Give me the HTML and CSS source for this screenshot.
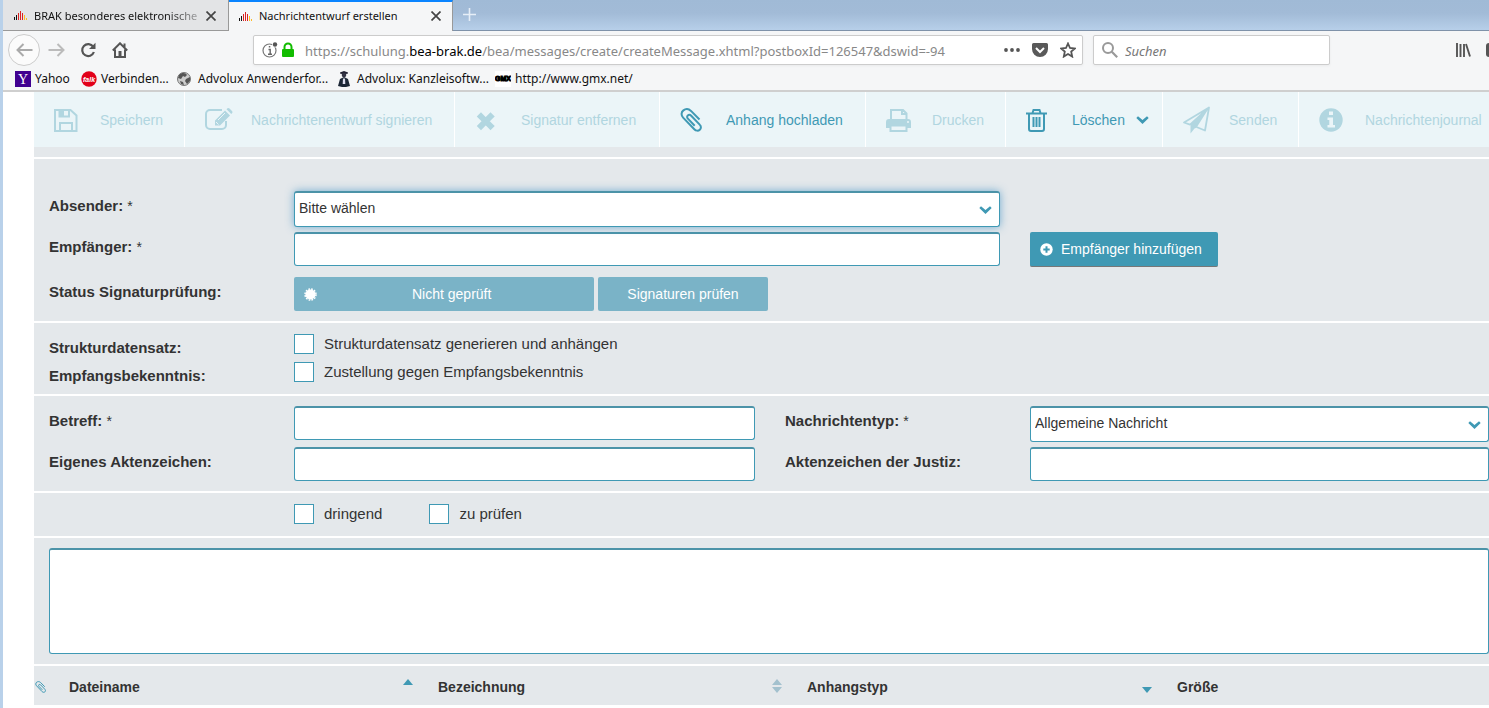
FILE: index.html
```html
<!DOCTYPE html>
<html lang="de">
<head>
<meta charset="utf-8">
<meta name="viewport" content="width=device-width, initial-scale=1">
<title>Nachrichtentwurf erstellen</title>
<link rel="stylesheet" href="styles.css">
</head>
<body>
<svg class="sprite" aria-hidden="true">
  <symbol id="favicon" viewBox="0 0 13 9"><path d="M0 6h1v3H0zM2 4h1v5H2z" fill="#111"/><path d="M4 2h1v7H4zM6 0h1v9H6zM8 2h1v7H8z" fill="#d22"/><path d="M10 4h1v5h-1zM12 7h1v2h-1z" fill="#fb2"/></symbol>
  <symbol id="cross" viewBox="0 0 10 10"><path d="M.5.5l9 9M9.500.5l-9 9" stroke="currentColor" stroke-width="1.700" fill="none"/></symbol>
  <symbol id="chevron" viewBox="0 0 13 8"><path d="M.3 2 2 .2l4.500 3.700L11 .2 12.700 2 6.500 8z" fill="currentColor"/></symbol>
  <symbol id="clip" viewBox="0 0 22 24"><path d="M19.500 11.500 11 2.900C8.800.9 5.700.6 3.400 2.400s-2.500 5-.3 7.200l11.200 11.700c1.600 1.600 4 1.800 5.500.4s1.500-3.500-.1-5.100L11.200 7.700C10.200 6.700 8.700 6.600 7.800 7.400s-.9 2.200.1 3.200l6.800 7.100" fill="none" stroke="currentColor" stroke-width="2"/></symbol>
</svg>

<header class="browser">
  <div class="tabs" role="tablist">
    <button class="tab" role="tab" aria-selected="false"><svg class="favicon"><use href="#favicon"/></svg><span class="tab-title tab-title-fade">BRAK besonderes elektronische</span><svg class="tab-close"><use href="#cross"/></svg></button>
    <button class="tab tab-active" role="tab" aria-selected="true"><svg class="favicon"><use href="#favicon"/></svg><span class="tab-title">Nachrichtentwurf erstellen</span><svg class="tab-close"><use href="#cross"/></svg></button>
    <button class="new-tab" aria-label="Neuer Tab"><svg width="13" height="13" viewBox="0 0 13 13"><path d="M6.500 0v13M0 6.500h13" stroke="#e6eef7" stroke-width="1.600"/></svg></button>
  </div>
  <div class="navbar">
    <div class="nav-buttons">
      <button class="nav-button nav-back" aria-label="Zurück"><svg width="17" height="14" viewBox="0 0 17 14"><path d="M16.500 7H1.500M7.500 1l-6 6 6 6" fill="none" stroke="#aaa" stroke-width="2"/></svg></button>
      <button class="nav-button" aria-label="Vor"><svg width="17" height="14" viewBox="0 0 17 14"><path d="M.5 7h15M9.500 1l6 6-6 6" fill="none" stroke="#bbb" stroke-width="2"/></svg></button>
      <button class="nav-button" aria-label="Neu laden"><svg width="16" height="16" viewBox="0 0 16 16"><path d="M13.200 4.700A6 6 0 1 0 13.900 10" fill="none" stroke="#555" stroke-width="2.200"/><path d="M15.500.8V7H9z" fill="#555"/></svg></button>
      <button class="nav-button" aria-label="Startseite"><svg width="16" height="16" viewBox="0 0 16 16"><path d="M.8 8.500 8 1.300l7.200 7.200M3 7.500V15h10V7.500M12.500 1.500V5" fill="none" stroke="#555" stroke-width="2"/><path d="M6.500 9h3v6h-3z" fill="#555"/></svg></button>
    </div>
    <div class="urlbar">
      <svg class="identity" width="34" height="16" viewBox="0 0 34 16"><circle cx="7.500" cy="8.500" r="6.500" fill="none" stroke="#777" stroke-width="1.200"/><path d="M6.500 7.500h1.700v4.500M6 12.200h4M6.800 4.700h1.500" fill="none" stroke="#666" stroke-width="1.400"/><circle cx="13" cy="2.500" r="3" fill="#fff"/><circle cx="13" cy="2.500" r="2.200" fill="#555"/><rect x="20" y="7" width="12" height="8" rx="1" fill="#12bc00"/><path d="M22.500 8V5a3.500 3.500 0 0 1 7 0v3" fill="none" stroke="#12bc00" stroke-width="2"/></svg>
      <span class="url" role="textbox" contenteditable="true" spellcheck="false" aria-label="Adresse">https://schulung.<span class="url-domain">bea-brak.de</span>/bea/messages/create/createMessage.xhtml?postboxId=126547&amp;dswid=-94</span>
      <button class="url-action" aria-label="Seitenaktionen"><svg width="16" height="4" viewBox="0 0 16 4"><g fill="#555"><circle cx="2" cy="2" r="1.900"/><circle cx="8" cy="2" r="1.900"/><circle cx="14" cy="2" r="1.900"/></g></svg></button>
      <button class="url-action" aria-label="Pocket"><svg width="16" height="14" viewBox="0 0 16 14"><path d="M1.500 0h13A1.500 1.500 0 0 1 16 1.500V6A8 8 0 0 1 0 6V1.500A1.500 1.500 0 0 1 1.500 0z" fill="#595959"/><path d="m4 5 4 4 4-4" fill="none" stroke="#fff" stroke-width="2"/></svg></button>
      <button class="url-action" aria-label="Lesezeichen"><svg width="16" height="16" viewBox="0 0 16 16"><path d="m8 1.500 2 4.500 4.800.5-3.600 3.200 1 4.900L8 12.100l-4.200 2.500 1-4.900L1.200 6.500 6 6z" fill="none" stroke="#555" stroke-width="1.800"/></svg></button>
    </div>
    <label class="search"><svg width="16" height="16" viewBox="0 0 16 16"><circle cx="6" cy="6" r="5" fill="none" stroke="#999" stroke-width="2"/><path d="m9.800 9.800 5.400 5.400" stroke="#999" stroke-width="2.200"/></svg><input class="search-input" type="search" placeholder="Suchen" aria-label="Suchen"></label>
    <div class="nav-right">
      <button class="library" aria-label="Bibliothek"><svg width="15" height="14" viewBox="0 0 15 14"><path d="M1 0v14M4.500 1v13M8 1v13M10 1l4 12.500" fill="none" stroke="#555" stroke-width="1.900"/></svg></button>
      <button class="sidebar-toggle" aria-label="Seitenleiste"></button>
    </div>
  </div>
  <nav class="bookmarks" aria-label="Lesezeichen">
    <a class="bookmark bookmark-yahoo" href="#"><svg width="16" height="16" viewBox="0 0 16 16"><path d="M0 0h16v16H0z" fill="#400090"/><text class="yahoo-mark" x="8" y="13" text-anchor="middle">Y</text></svg>Yahoo</a>
    <a class="bookmark bookmark-falk" href="#"><svg width="16" height="16" viewBox="0 0 16 16"><circle cx="8" cy="8" r="7.700" fill="#e2001a"/><text class="falk-mark" x="8" y="11" text-anchor="middle">falk</text></svg>Verbinden...</a>
    <a class="bookmark bookmark-forum" href="#"><svg width="14" height="14" viewBox="0 0 14 14"><circle cx="7" cy="7" r="6.500" fill="#ccc" stroke="#777"/><path d="M2 3c3-3 7-2 8 0L8 5 6 4 4 7 1 6zm7 4 4-2v4l-3 3-2-3zM3 9l3 1 1 3-3-1z" fill="#555"/></svg>Advolux Anwenderfor...</a>
    <a class="bookmark bookmark-advolux" href="#"><svg width="12" height="16" viewBox="0 0 12 16"><path d="M2 1.500 6 0l4 1.500v1L6 3.500l-4-1z" fill="#223"/><circle cx="6" cy="4" r="2.300" fill="#334"/><path d="m0 15 2-7 4-2 4 2 2 7-4 1H4z" fill="#1b2635"/><path d="m5 7 1 1 1-1 .3 6H4.700z" fill="#dde"/></svg>Advolux: Kanzleisoftw...</a>
    <a class="bookmark bookmark-gmx" href="#"><svg width="16" height="16" viewBox="0 0 16 16"><path d="M0 0h16v16H0z" fill="#fff"/><text class="gmx-mark" x="8" y="10" text-anchor="middle">GMX</text></svg>http://www.gmx.net/</a>
  </nav>
</header>

<main class="page">
  <div class="toolbar" role="toolbar" aria-label="Nachricht">
    <button class="tool" disabled><svg class="tool-icon" viewBox="0 0 32 32"><path d="M5 6h15.500l6 5.500V27H5zM10 27v-8h12v8M9.500 6v6.500H19V6" fill="none" stroke="currentColor" stroke-width="2"/><path d="M9 5h5v8H9z" fill="currentColor"/></svg>Speichern</button>
    <button class="tool" disabled><svg class="tool-icon" viewBox="0 0 32 32"><path d="M21 6H9a4 4 0 0 0-4 4v11a4 4 0 0 0 4 4h12a4 4 0 0 0 4-4v-4" fill="none" stroke="currentColor" stroke-width="2"/><path d="M14 21.500v-5l10-10 5 5-10 10zM25.500 5.300l1-1q1-.7 2 .2l2.500 2.500q1 1 .2 2l-1 1z" fill="currentColor"/><path d="m17 16 7-7M15 18l2.500 2.500" stroke="#ebf5f8"/></svg>Nachrichtenentwurf signieren</button>
    <button class="tool" disabled><svg class="tool-icon" viewBox="0 0 32 32"><path d="m10 12.500 9.500 9.500m0-9.500-9.500 9.500" stroke="currentColor" stroke-width="6" stroke-linecap="square"/></svg>Signatur entfernen</button>
    <button class="tool"><svg class="tool-icon" viewBox="-4 -4 32 32"><use href="#clip" width="22" height="24"/></svg>Anhang hochladen</button>
    <button class="tool" disabled><svg class="tool-icon" viewBox="0 0 32 32"><path d="M9 16V6h12l3.500 3.500V16M20 6v4h4" fill="none" stroke="currentColor" stroke-width="2"/><path d="M7 15h19a3 3 0 0 1 3 3v6h-4v-3H8v3H4v-6a3 3 0 0 1 3-3z" fill="currentColor"/><path d="M8.500 21.500h16V27h-16z" fill="#ebf5f8" stroke="currentColor" stroke-width="2"/><circle cx="26" cy="18" r="1" fill="#ebf5f8"/></svg>Drucken</button>
    <button class="tool"><svg class="tool-icon" viewBox="0 0 32 32"><path d="M4 9.500h21M10.500 9l1-3h6l1 3M7 9v16q0 2 2 2h11q2 0 2-2V9M11.500 13v10M14.500 13v10M17.500 13v10" fill="none" stroke="currentColor" stroke-width="2"/></svg>Löschen<svg class="chevron tool-chevron"><use href="#chevron"/></svg></button>
    <button class="tool" disabled><svg class="tool-icon" viewBox="0 0 32 32"><path d="M30 3.500 5 18.500l6 2.200L30 3.500l-4 23-8.500-3.500" fill="none" stroke="currentColor" stroke-width="1.800" stroke-linejoin="round"/><path d="M30 4 11.500 20.500v9l4-5 2-.7z" fill="currentColor"/></svg>Senden</button>
    <button class="tool" disabled><svg class="tool-icon" viewBox="0 0 32 32"><circle cx="16" cy="16" r="11.700" fill="currentColor"/><path d="M14 7.500h4V11h-4zM12.500 13.500H18V21h2v2.500h-7.500V21h1.800v-5h-1.800z" fill="#ebf5f8"/></svg>Nachrichtenjournal</button>
  </div>
  <div class="strip"></div>

  <form>
    <section class="section section-address">
      <div class="row row-tall">
        <label class="label" for="absender">Absender: <span class="required">*</span></label>
        <div class="select-box field-wide"><select class="control select select-focus" id="absender"><option>Bitte wählen</option></select><svg class="chevron select-chevron"><use href="#chevron"/></svg></div>
      </div>
      <div class="row row-recipient">
        <label class="label" for="empfaenger">Empfänger: <span class="required">*</span></label>
        <input class="control field-wide" id="empfaenger" type="text">
        <button class="button button-primary" type="button"><svg width="13" height="13" viewBox="0 0 13 13"><circle cx="6.500" cy="6.500" r="6.200" fill="#fff"/><path d="M6.500 3.300v6.400M3.300 6.500h6.400" stroke="#3f99b4" stroke-width="2"/></svg>Empfänger hinzufügen</button>
      </div>
      <div class="row">
        <span class="label">Status Signaturprüfung:</span>
        <div class="status">
          <button class="button button-muted button-status" type="button"><svg class="status-icon" viewBox="0 0 13 13"><circle cx="6.500" cy="6.500" r="5" fill="#fff"/><circle cx="6.500" cy="6.500" r="5.500" fill="none" stroke="#fff" stroke-width="1.500" stroke-dasharray="1.700 1.180"/></svg>Nicht geprüft</button>
          <button class="button button-muted button-check" type="button">Signaturen prüfen</button>
        </div>
      </div>
    </section>

    <section class="section section-options">
      <div class="row"><span class="label label-option">Strukturdatensatz:</span><label class="option"><input class="check" type="checkbox">Strukturdatensatz generieren und anhängen</label></div>
      <div class="row"><span class="label label-option">Empfangsbekenntnis:</span><label class="option"><input class="check" type="checkbox">Zustellung gegen Empfangsbekenntnis</label></div>
    </section>

    <section class="section section-subject">
      <div class="row row-tall">
        <label class="label" for="betreff">Betreff: <span class="required">*</span></label>
        <input class="control" id="betreff" type="text">
        <label class="label label-second" for="typ">Nachrichtentyp: <span class="required">*</span></label>
        <div class="select-box"><select class="control select" id="typ"><option>Allgemeine Nachricht</option></select><svg class="chevron select-chevron"><use href="#chevron"/></svg></div>
      </div>
      <div class="row">
        <label class="label" for="eigenes">Eigenes Aktenzeichen:</label>
        <input class="control" id="eigenes" type="text">
        <label class="label label-second" for="justiz">Aktenzeichen der Justiz:</label>
        <input class="control" id="justiz" type="text">
      </div>
    </section>

    <section class="section section-flags">
      <label class="option"><input class="check" type="checkbox">dringend</label>
      <label class="option"><input class="check" type="checkbox">zu prüfen</label>
    </section>

    <section class="section section-message">
      <textarea class="control message" aria-label="Nachricht"></textarea>
    </section>
  </form>

  <table class="files">
    <colgroup><col class="col-icon"><col class="col-name"><col class="col-name"><col class="col-type"><col></colgroup>
    <thead><tr>
      <th class="cell-icon" scope="col" aria-label="Anhang"><svg class="mini-clip"><use href="#clip"/></svg></th>
      <th scope="col"><div class="head">Dateiname<svg class="sort" viewBox="0 0 10 14"><path d="m5 0 5 6H0z" fill="#3f99b4"/></svg></div></th>
      <th scope="col"><div class="head">Bezeichnung<svg class="sort" viewBox="0 0 10 14"><path d="m5 0 5 6H0zM5 14l5-6H0z" fill="#a3c1ce"/></svg></div></th>
      <th scope="col"><div class="head">Anhangstyp<svg class="sort" viewBox="0 0 10 14"><path d="m5 14 5-6H0z" fill="#3f99b4"/></svg></div></th>
      <th scope="col"><div class="head">Größe</div></th>
    </tr></thead>
  </table>
</main>
</body>
</html>
```
FILE: styles.css
```css
* { box-sizing: border-box; }
body {
  margin: 0;
  min-height: 100vh;
  overflow: hidden;
  background: #fff;
  border-left: 3px solid #b9d1ea;
  color: #333;
  font: 14px/20px "Liberation Sans", Arial, sans-serif;
}
button, input, select, textarea { font: inherit; color: inherit; margin: 0; }
button { border: 0; padding: 0; background: none; }
svg { flex: none; display: block; }
.sprite { position: absolute; width: 0; height: 0; }

/* Browser frame */
.browser {
  background: #f5f6f7;
  border-bottom: 2px solid #cfcfcf;
  color: #111;
  font: 12px/16px "Noto Sans", "Open Sans", sans-serif;
}
.tabs {
  display: flex;
  height: 31px;
  background: linear-gradient(#a0bad6 0, #a2bbd7 13px, #b7cfe9 30px);
  border-bottom: 1px solid #7f92a9;
}
.tab {
  display: flex;
  align-items: center;
  width: 226px;
  height: 31px;
  padding: 1px 12px 0 11px;
  background: #e3e4e6;
  border-right: 1px solid #999;
  border-bottom: 1px solid #999;
  font-size: 11px;
}
.tab-active {
  width: 224px;
  background: #f5f6f7;
  border-top: 2px solid #0a84ff;
  border-bottom: 0;
  padding: 0 11px 1px 10px;
}
.favicon { width: 13px; height: 9px; margin-right: 7px; }
.tab-title { flex: 1; min-width: 0; white-space: nowrap; text-align: left; }
.tab-title-fade { -webkit-mask-image: linear-gradient(90deg, #000 80%, #0004); mask-image: linear-gradient(90deg, #000 80%, #0004); }
.tab-close { width: 10px; height: 10px; margin-left: 7px; color: #444; }
.new-tab { padding: 0 10px 2px; }

.navbar {
  display: grid;
  grid-template-columns: 245px minmax(0, 830fr) minmax(0, 247fr) minmax(0, 159fr);
  align-items: center;
  height: 38px;
  padding-left: 5px;
}
.nav-buttons { display: flex; }
.nav-button { display: flex; align-items: center; justify-content: center; width: 32px; height: 32px; }
.nav-back { border: 1px solid #ccc; border-radius: 50%; background: #fbfbfb; }
.urlbar, .search {
  display: flex;
  align-items: center;
  height: 30px;
  background: #fff;
  border: 1px solid #ccc;
  border-radius: 2px;
  box-shadow: 0 1px 3px #0000000d;
}
.urlbar { padding: 0 6px 0 8px; gap: 12px; }
.identity { margin-right: -3px; }
.url { flex: 1; min-width: 0; padding-top: 2px; overflow: hidden; white-space: nowrap; color: #888; font-size: 13px; line-height: 20px; outline: 0; }
.url-domain { color: #000; }
.url-action { display: flex; }
.search { margin-left: 10px; padding: 0 8px; gap: 7px; }
.search-input { flex: 1; min-width: 0; padding: 2px 0 0; border: 0; outline: 0; background: none; font-size: 13px; }
.search-input::placeholder { color: #777; font-style: italic; opacity: 1; }
.nav-right { display: flex; justify-content: flex-end; gap: 15px; }
.sidebar-toggle { width: 3px; height: 14px; background: #555; border-radius: 3px 0 0 3px; }
.bookmarks { display: flex; align-items: center; height: 21px; padding: 0 12px 1px; }
.bookmark { display: flex; align-items: center; gap: 4px; color: #111; text-decoration: none; white-space: nowrap; }
.bookmark-yahoo { width: 66px; }
.bookmark-falk { width: 96px; }
.bookmark-forum { width: 161px; gap: 7px; }
.bookmark-advolux { width: 157px; gap: 7px; }
.yahoo-mark { font: 14px "Liberation Serif", serif; fill: #fff; }
.falk-mark { font: italic bold 7px "Liberation Sans", sans-serif; fill: #fff; }
.gmx-mark { font: bold 7px "Liberation Sans", sans-serif; fill: #000; stroke: #000; stroke-width: 1px; }

/* Message actions */
.page { padding-left: 31px; }
.toolbar {
  display: grid;
  grid-template-columns: 151px 270px 205px 206px 140px 157px 136px minmax(190px, 1fr);
  height: 55px;
  background: #ebf5f8;
}
.tool {
  display: flex;
  align-items: center;
  padding: 0 0 0 16px;
  border-right: 1px solid #fff;
  color: #3f99b4;
  white-space: nowrap;
}
.tool:last-child { border-right: 0; }
.tool:disabled { color: #b1d6e0; }
.tool-icon { width: 32px; height: 32px; margin-right: 18px; }
.chevron { width: 13px; height: 8px; color: #3f99b4; }
.tool-chevron { margin-left: 11px; }
.strip { height: 12px; background: #e4e8eb; border-bottom: 2px solid #fff; }

/* Form */
.section { background: #e4e8eb; border-bottom: 2px solid #fff; }
.section-address { padding: 32px 0 10px 15px; }
.section-options { padding: 11px 0 8px 15px; }
.section-subject { padding: 10px 0 10px 15px; }
.section-flags { display: flex; gap: 47px; padding: 11px 0 12px 260px; }
.section-message { padding: 10px 0 10px 15px; }
.row { display: grid; grid-template-columns: 245px minmax(0, 461fr) 275px minmax(0, 459fr); align-items: start; }
.row-tall { margin-bottom: 5px; }
.row-recipient { margin-bottom: 10px; }
.label { font-size: 15px; font-weight: bold; line-height: 30px; }
.label-second { padding-left: 30px; }
.label-option { padding-top: 4px; line-height: 20px; }
.section-options .row + .row { margin-top: 4px; }
.required { font-size: 14px; font-weight: normal; }
.control {
  display: block;
  width: 100%;
  height: 34px;
  padding: 0 4px;
  background: #fff;
  border: 1px solid #3f99b4;
  border-top: 2px solid #4c93a8;
  border-radius: 3px;
  outline: 0;
}
.field-wide { grid-column: 2 / 4; width: calc(100% - 30px); }
.select-box { position: relative; }
.select { height: 36px; padding-bottom: 4px; appearance: none; }
.select-focus { box-shadow: 0 0 8px #3f8fc4b0; }
.select-chevron { position: absolute; right: 8px; top: 15px; pointer-events: none; }
.button { display: flex; align-items: center; justify-content: center; height: 34px; border-radius: 2px; color: #fff; white-space: nowrap; }
.button-primary { justify-self: start; height: 35px; padding: 0 16px 0 10px; gap: 8px; background: #3f99b4; border-bottom: 1px solid #777; }
.button-muted { background: #7ab3c7; }
.status { grid-column: 2 / 4; display: flex; gap: 4px; }
.button-status { width: 300px; padding: 0 10px; justify-content: flex-start; }
.status-icon { width: 13px; height: 13px; margin-right: 95px; }
.button-check { width: 170px; }
.option { display: flex; align-items: center; gap: 10px; font-size: 15px; grid-column: 2 / 4; }
.check { flex: none; width: 20px; height: 20px; appearance: none; background: #fff; border: 1px solid #3f99b4; }
.message { height: 106px; resize: none; }

/* Attachments */
.files { width: 100%; table-layout: fixed; border-collapse: collapse; }
.col-icon { width: 20px; }
.col-name { width: 369px; }
.col-type { width: 370px; }
.files th { height: 39px; padding: 3px 10px 0 15px; background: #e4e8eb; text-align: left; }
.files .cell-icon { padding: 3px 0 0 1px; }
.mini-clip { width: 11px; height: 12px; color: #3f99b4; }
.head { display: flex; align-items: center; justify-content: space-between; }
.sort { width: 10px; height: 14px; margin-bottom: 2px; }
```
